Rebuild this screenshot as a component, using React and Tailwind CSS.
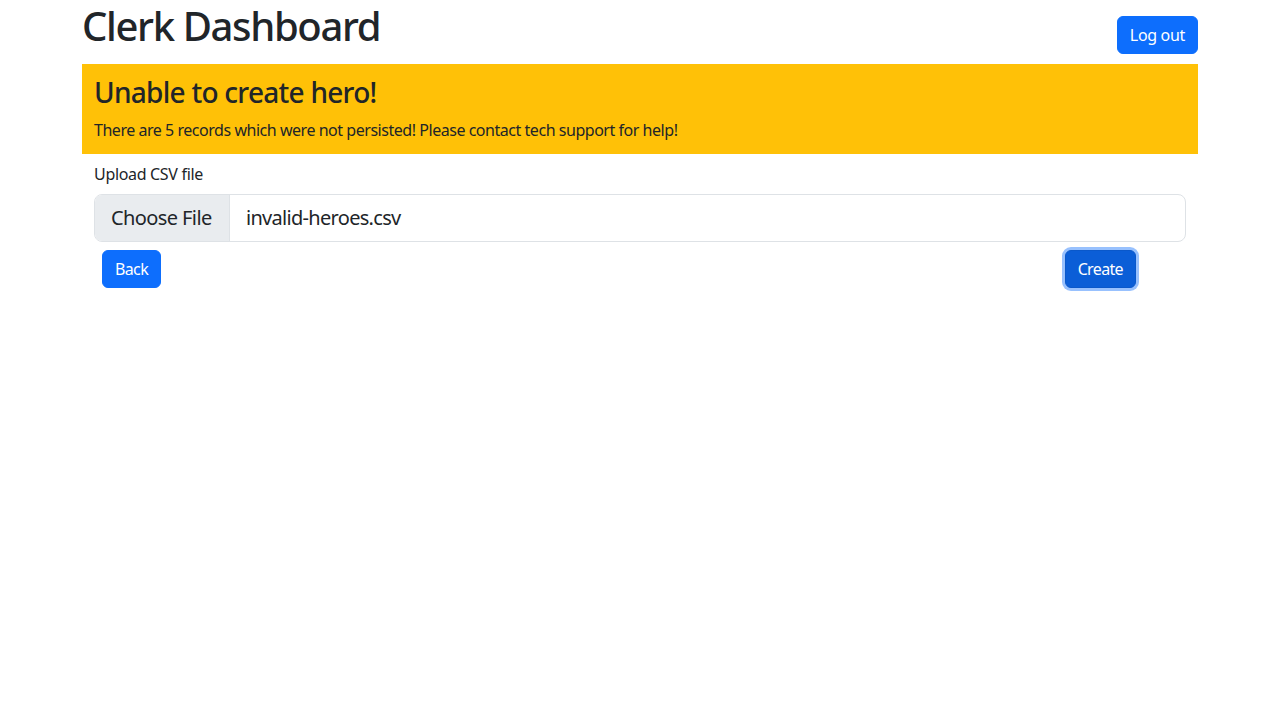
import React from 'react';

const font = { fontFamily: '"Noto Sans", "Open Sans", sans-serif' };

export default function App() {
  return (
    <div className="min-h-screen bg-white text-[#212529]" style={font}>
      <div className="mx-auto w-[1140px] px-3">
        <div className="flex h-16 items-start justify-between">
          <h1 className="pt-0.5 text-[40px] font-medium leading-[1.2] tracking-[-0.034em]">Clerk Dashboard</h1>
          <button className="mt-4 rounded-md border border-[#0d6efd] bg-[#0d6efd] px-3 py-1.5 text-base leading-6 tracking-[-0.02em] text-white">Log out</button>
        </div>
        <div className="bg-[#ffc107] p-3">
          <h3 className="mb-2 text-[28px] font-medium leading-[1.2] tracking-[-0.026em]">Unable to create hero!</h3>
          <p className="text-base leading-6 tracking-[-0.029em]">There are 5 records which were not persisted! Please contact tech support for help!</p>
        </div>
        <div className="px-3 pt-2">
          <label className="mb-2 block text-base leading-6 tracking-[-0.02em]">Upload CSV file</label>
          <div className="flex h-12 overflow-hidden rounded-lg border border-[#dee2e6] text-xl">
            <div className="flex w-[135px] items-center border-r border-[#dee2e6] bg-[#e9ecef] px-4 tracking-[-0.03em]">Choose File</div>
            <div className="flex items-center px-4 tracking-[-0.035em]">invalid-heroes.csv</div>
          </div>
          <div className="mt-2 flex justify-between pl-2 pr-[50px]">
            <button className="rounded-md border border-[#0d6efd] bg-[#0d6efd] px-3 py-1.5 text-base leading-6 tracking-[-0.04em] text-white">Back</button>
            <button className="rounded-md border border-[#0a58ca] bg-[#0b5ed7] px-3 py-1.5 text-base leading-6 tracking-[-0.04em] text-white ring-[3px] ring-[#98c1fe]">Create</button>
          </div>
        </div>
      </div>
    </div>
  );
}
